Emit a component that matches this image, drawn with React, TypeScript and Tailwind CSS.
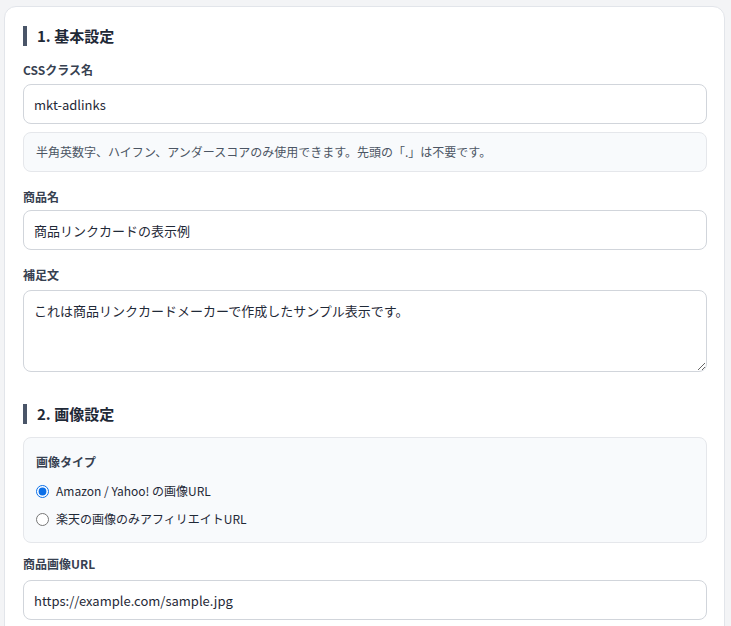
import React from "react";

const font = { fontFamily: '"Noto Sans CJK JP", "Noto Sans", sans-serif' };

function Heading({ children, className = "" }: { children: React.ReactNode; className?: string }) {
  return (
    <h2
      className={`border-l-4 border-[#4a5568] pl-[10px] text-[15px] font-bold leading-5 text-[#1f2937] ${className}`}
    >
      {children}
    </h2>
  );
}

function Label({ children, className = "" }: { children: React.ReactNode; className?: string }) {
  return <div className={`text-[12px] font-bold leading-[18px] text-[#374151] ${className}`}>{children}</div>;
}

function TextInput({ value }: { value: string }) {
  return (
    <input
      type="text"
      defaultValue={value}
      className="block h-[40px] w-full rounded-lg border border-[#d1d5db] bg-white px-[10px] text-[13px] text-[#1f2937] outline-none"
    />
  );
}

export default function App() {
  return (
    <div className="min-h-[626px] bg-[#f3f4f6] pt-[6px] pl-[4px] pr-[6px]" style={font}>
      <div className="rounded-xl border border-[#e2e5ea] bg-white pl-[18px] pr-[17px] pt-[19px] pb-8">
        <Heading className="mb-[15px]">1. 基本設定</Heading>

        <Label className="mb-[5px]">CSSクラス名</Label>
        <TextInput value="mkt-adlinks" />
        <div className="mt-2 flex h-[40px] items-center rounded-lg border border-[#e5e7eb] bg-[#f8fafc] px-3 text-[12px] text-[#4b5563]">
          半角英数字、ハイフン、アンダースコアのみ使用できます。先頭の「.」は不要です。
        </div>

        <div className="mt-4">
          <Label className="mb-1">商品名</Label>
          <TextInput value="商品リンクカードの表示例" />
        </div>

        <div className="mt-4">
          <Label className="mb-[6px]">補足文</Label>
          <textarea
            defaultValue="これは商品リンクカードメーカーで作成したサンプル表示です。"
            className="block h-[82px] w-full rounded-lg border border-[#d1d5db] bg-white px-[10px] py-[10px] text-[13px] leading-5 text-[#1f2937] outline-none"
          />
        </div>

        <Heading className="mt-8 mb-[13px]">2. 画像設定</Heading>

        <div className="rounded-lg border border-[#e5e7eb] bg-[#f8fafc] px-3 pt-[15px] pb-[9px]">
          <Label className="mb-[6px]">画像タイプ</Label>
          <label className="flex h-[28px] items-center gap-[7px] text-[12px] text-[#1f2937]">
            <input type="radio" name="imgtype" defaultChecked className="m-0 h-[13px] w-[13px] accent-[#0b6fe8]" />
            Amazon / Yahoo! の画像URL
          </label>
          <label className="flex h-[28px] items-center gap-[7px] text-[12px] text-[#1f2937]">
            <input type="radio" name="imgtype" className="m-0 h-[13px] w-[13px]" />
            楽天の画像のみアフィリエイトURL
          </label>
        </div>

        <div className="mt-[12px]">
          <Label className="mb-[7px]">商品画像URL</Label>
          <TextInput value="https://example.com/sample.jpg" />
        </div>
      </div>
    </div>
  );
}
